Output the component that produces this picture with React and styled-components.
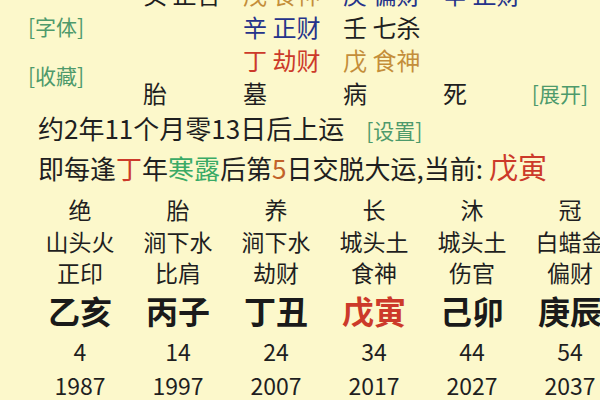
import React from "react";
import styled, { createGlobalStyle } from "styled-components";

const palette = {
  water: "#1f1f1f",
  earth: "#c48e3a",
  metal: "#25338a",
  fire: "#cc3a2a",
  link: "#4e9a6b",
  solar: "#3aaa66",
  num: "#c2622a",
};

const hidden = [
  [
    { s: "癸", g: "正官", c: "water" },
    { s: "戊", g: "食神", c: "earth" },
    { s: "庚", g: "偏财", c: "metal" },
    { s: "辛", g: "正财", c: "metal" },
  ],
  [null, { s: "辛", g: "正财", c: "metal" }, { s: "壬", g: "七杀", c: "water" }, null],
  [null, { s: "丁", g: "劫财", c: "fire" }, { s: "戊", g: "食神", c: "earth" }, null],
];

const stages = ["胎", "墓", "病", "死"];

const luck = [
  { stage: "绝", nayin: "山头火", god: "正印", pillar: "乙亥", age: 4, year: 1987 },
  { stage: "胎", nayin: "涧下水", god: "比肩", pillar: "丙子", age: 14, year: 1997 },
  { stage: "养", nayin: "涧下水", god: "劫财", pillar: "丁丑", age: 24, year: 2007 },
  { stage: "长", nayin: "城头土", god: "食神", pillar: "戊寅", age: 34, year: 2017, current: true },
  { stage: "沐", nayin: "城头土", god: "伤官", pillar: "己卯", age: 44, year: 2027 },
  { stage: "冠", nayin: "白蜡金", god: "偏财", pillar: "庚辰", age: 54, year: 2037 },
];

const App = () => {
  return (
    <>
      <GlobalStyle />
      <Page>
        <Upper>
          <SideLinks>
            <LinkText>[字体]</LinkText>
            <LinkText>[收藏]</LinkText>
          </SideLinks>
          {hidden.map((row, i) => (
            <React.Fragment key={i}>
              {row.map((cell, j) =>
                cell ? (
                  <Cell key={j} color={palette[cell.c]}>
                    {cell.s} {cell.g}
                  </Cell>
                ) : (
                  <Cell key={j} />
                )
              )}
              <Cell />
            </React.Fragment>
          ))}
          {stages.map((st) => (
            <Cell key={st}>{st}</Cell>
          ))}
          <ExpandCell>
            <LinkText>[展开]</LinkText>
          </ExpandCell>
        </Upper>

        <Line>
          约2年11个月零13日后上运
          <SetLink>[设置]</SetLink>
        </Line>
        <Line>
          即每逢<Tint color={palette.fire}>丁</Tint>年
          <Tint color={palette.solar}>寒露</Tint>后第
          <Tint color={palette.num}>5</Tint>日交脱大运,当前:{" "}
          <Current>戊寅</Current>
        </Line>

        <Table>
          <TableRow h={32}>
            {luck.map((l) => (
              <span key={l.year}>{l.stage}</span>
            ))}
          </TableRow>
          <TableRow h={31}>
            {luck.map((l) => (
              <span key={l.year}>{l.nayin}</span>
            ))}
          </TableRow>
          <TableRow h={31}>
            {luck.map((l) => (
              <span key={l.year}>{l.god}</span>
            ))}
          </TableRow>
          <TableRow h={48} big>
            {luck.map((l) => (
              <Pillar key={l.year} current={l.current}>
                {l.pillar}
              </Pillar>
            ))}
          </TableRow>
          <TableRow h={34}>
            {luck.map((l) => (
              <span key={l.year}>{l.age}</span>
            ))}
          </TableRow>
          <TableRow h={30}>
            {luck.map((l) => (
              <span key={l.year}>{l.year}</span>
            ))}
          </TableRow>
        </Table>
      </Page>
    </>
  );
};

export default App;

const GlobalStyle = createGlobalStyle`
  body {
    margin: 0;
    background: #fcf8cb;
    font-family: "Noto Sans CJK SC", "Noto Sans", sans-serif;
    color: #1f1f1f;
  }
`;

const Page = styled.div`
  width: 600px;
  height: 400px;
  overflow: hidden;
  background: #fcf8cb;
`;

const Upper = styled.div`
  display: grid;
  grid-template-columns: 115px repeat(4, 100px) minmax(0, 1fr);
  grid-auto-rows: 33px;
  margin-top: -23px;
  padding-left: 28px;
`;

const SideLinks = styled.div`
  grid-column: 1;
  grid-row: 1 / span 4;
  display: flex;
  flex-direction: column;
  gap: 16px;
  padding-top: 33px;
  line-height: 33px;
`;

const Cell = styled.div`
  font-size: 24px;
  line-height: 33px;
  white-space: nowrap;
  color: ${(p) => p.color || "#1f1f1f"};
`;

const ExpandCell = styled.div`
  display: flex;
  justify-content: flex-end;
  align-items: center;
  min-width: 0;
  padding-right: 12px;
`;

const LinkText = styled.span`
  font-size: 21px;
  color: ${palette.link};
  white-space: nowrap;
  flex-shrink: 0;
`;

const SetLink = styled(LinkText)`
  margin-left: 22px;
`;

const Line = styled.div`
  display: flex;
  align-items: baseline;
  height: 38px;
  line-height: 38px;
  padding-left: 38px;
  font-size: 26px;
  white-space: nowrap;
  &:first-of-type {
    margin-top: 6px;
  }
`;

const Tint = styled.span`
  color: ${(p) => p.color};
`;

const Current = styled.span`
  color: ${palette.fire};
  font-size: 29px;
  margin-left: 6px;
`;

const Table = styled.div`
  margin-top: 7px;
  padding-left: 31px;
`;

const TableRow = styled.div`
  display: grid;
  grid-template-columns: repeat(6, 98px);
  height: ${(p) => p.h}px;
  align-items: center;
  justify-items: center;
  font-size: ${(p) => (p.big ? 32 : 23)}px;
  font-weight: ${(p) => (p.big ? 700 : 400)};
  white-space: nowrap;
`;

const Pillar = styled.span`
  color: ${(p) => (p.current ? palette.fire : "#1a1a1a")};
`;
